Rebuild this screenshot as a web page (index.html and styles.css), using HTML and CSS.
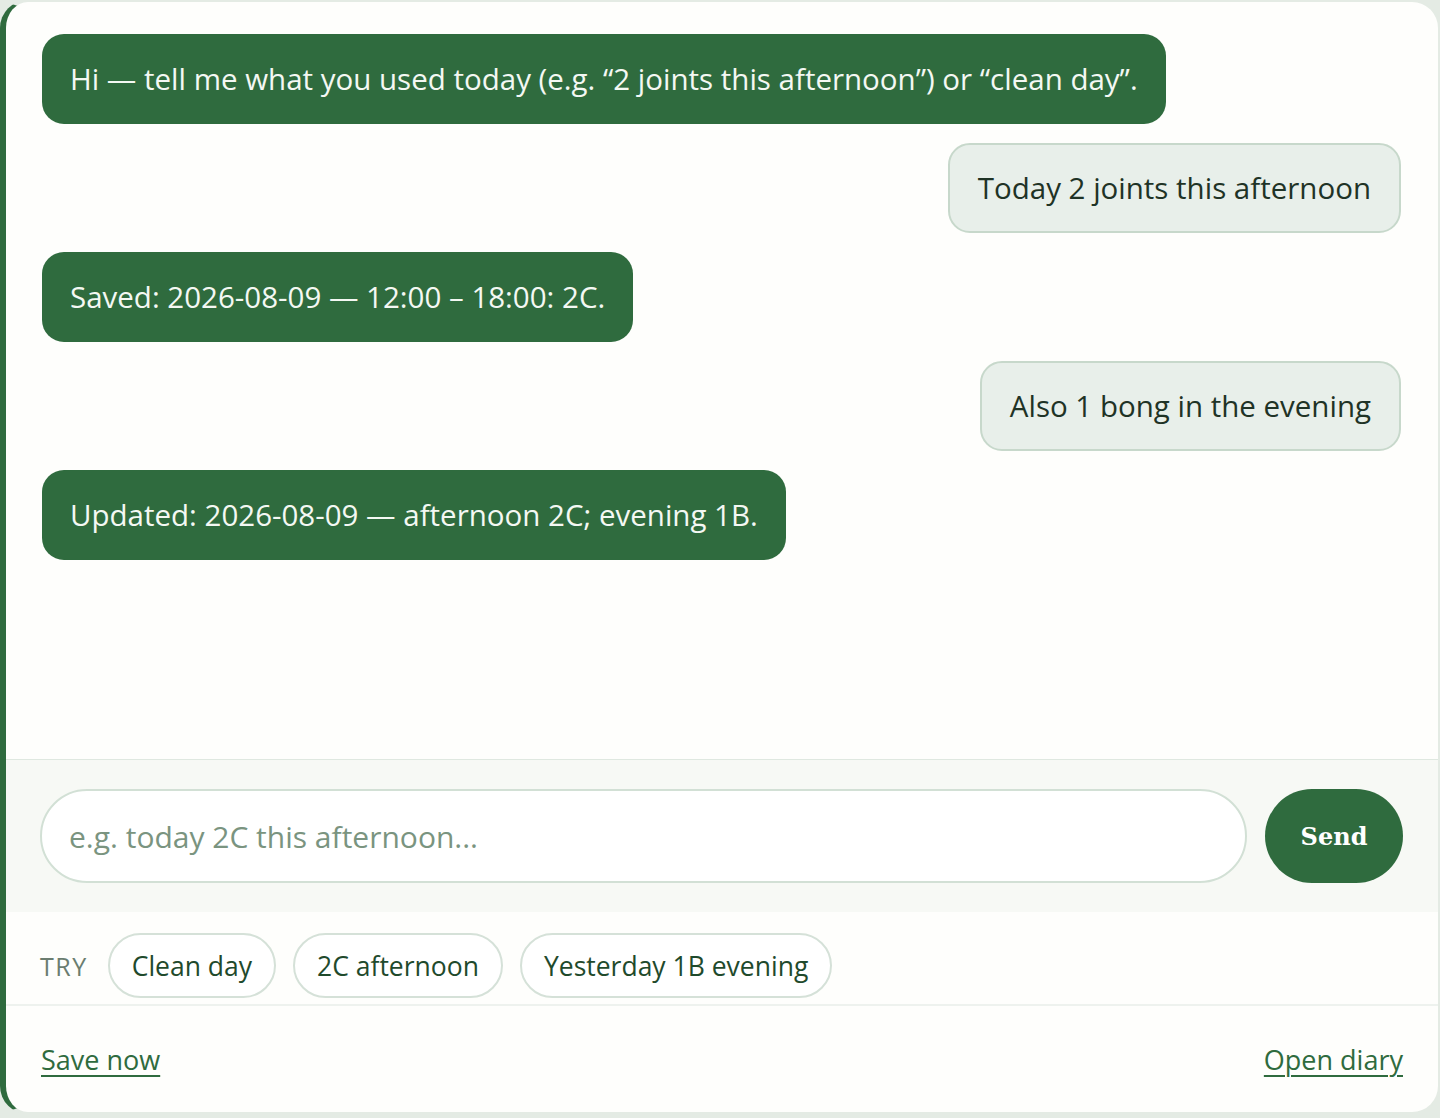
FILE: index.html
```html
<!DOCTYPE html>
<html lang="en">
<head>
  <meta charset="UTF-8">
  <meta name="viewport" content="width=device-width, initial-scale=1.0">
  <title>Diary Chat</title>
  <link rel="stylesheet" href="styles.css">
</head>
<body>
  <div class="chat">
    <div class="messages">
      <div class="msg bot">Hi — tell me what you used today (e.g. “2 joints this afternoon”) or “clean day”.</div>
      <div class="msg user">Today 2 joints this afternoon</div>
      <div class="msg bot">Saved: 2026-08-09 — 12:00 – 18:00: 2C.</div>
      <div class="msg user">Also 1 bong in the evening</div>
      <div class="msg bot">Updated: 2026-08-09 — afternoon 2C; evening 1B.</div>
    </div>

    <form class="composer">
      <input type="text" class="composer-input" placeholder="e.g. today 2C this afternoon...">
      <button type="submit" class="send-btn">Send</button>
    </form>

    <div class="suggestions">
      <span class="try-label">TRY</span>
      <button type="button" class="chip">Clean day</button>
      <button type="button" class="chip">2C afternoon</button>
      <button type="button" class="chip">Yesterday 1B evening</button>
    </div>

    <div class="chat-footer">
      <a href="#" class="footer-link">Save now</a>
      <a href="#" class="footer-link">Open diary</a>
    </div>
  </div>
</body>
</html>
```

FILE: styles.css
```css
html, body {
  margin: 0;
  padding: 0;
}
body {
  background: #e4ebe4;
  font-family: "Open Sans", "Noto Sans", sans-serif;
  color: #1f3326;
}
.chat {
  box-sizing: border-box;
  height: 1114px;
  display: flex;
  flex-direction: column;
  background: #fefefc;
  border: 2px solid #e4ebe4;
  border-left: 6px solid #2f6b3e;
  border-radius: 28px;
  overflow: hidden;
}
.messages {
  flex: 1;
  display: flex;
  flex-direction: column;
  gap: 19.5px;
  padding: 32px 37px 0 36px;
}
.msg {
  box-sizing: border-box;
  max-width: 85%;
  padding: 0 28px;
  height: 89.5px;
  display: flex;
  align-items: center;
  border-radius: 22px;
  font-size: 29.5px;
}
.msg.bot {
  align-self: flex-start;
  background: #2f6b3e;
  color: #f4f8f3;
}
.msg.user {
  align-self: flex-end;
  background: #e8efea;
  border: 2px solid #c7d8cb;
  color: #1f3326;
}
.composer {
  flex-shrink: 0;
  display: flex;
  gap: 18px;
  margin: 0;
  padding: 29px 35px 29px 34px;
  background: #f7f9f5;
  border-top: 1px solid #dfe8e0;
}
.composer-input {
  flex: 1;
  box-sizing: border-box;
  height: 94px;
  padding: 0 27px;
  border: 2px solid #d2e0d5;
  border-radius: 47px;
  background: #fff;
  font-family: inherit;
  font-size: 30px;
  color: #1f3326;
  outline: none;
}
.composer-input::placeholder {
  color: #7a9480;
}
.send-btn {
  width: 138px;
  height: 94px;
  border: none;
  border-radius: 47px;
  background: #2f6b3e;
  color: #fff;
  font-family: "DejaVu Serif", "Liberation Serif", serif;
  font-weight: bold;
  font-size: 24px;
  cursor: pointer;
}
.suggestions {
  flex-shrink: 0;
  box-sizing: border-box;
  height: 94px;
  display: flex;
  align-items: center;
  gap: 17px;
  padding: 15px 34px 0;
  border-bottom: 2px solid #eef2ee;
}
.try-label {
  font-size: 25px;
  color: #6b7d70;
  letter-spacing: 1.5px;
  margin-right: 3px;
}
.chip {
  height: 65px;
  padding: 0 22px;
  border: 2px solid #d5e1d8;
  border-radius: 33px;
  background: #fff;
  font-family: inherit;
  font-size: 26.5px;
  color: #1f4a2c;
  cursor: pointer;
}
.chat-footer {
  flex-shrink: 0;
  box-sizing: border-box;
  height: 106px;
  display: flex;
  justify-content: space-between;
  align-items: center;
  padding: 0 35px 0 35px;
}
.footer-link {
  font-size: 27px;
  color: #2f6b3e;
  text-decoration: underline;
  text-underline-offset: 5px;
  text-decoration-thickness: 2px;
}
```
